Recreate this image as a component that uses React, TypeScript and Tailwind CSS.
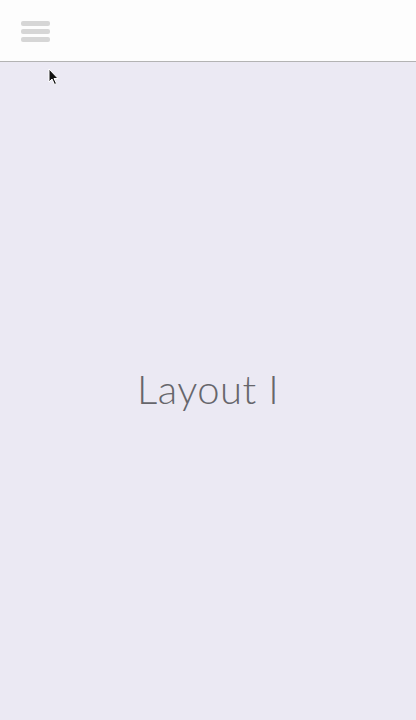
import React from "react";

export default function App() {
  return (
    <div className="relative flex h-[720px] w-[416px] flex-col overflow-hidden bg-[#ebe9f3]" style={{ fontFamily: "Lato, 'Open Sans', sans-serif" }}>
      <header className="flex h-[62px] shrink-0 items-start border-b border-[#b3b3b3] bg-[#fdfdfd] pl-[21px] pt-[21px]">
        <div className="flex w-[29px] flex-col gap-[3px]">
          <span className="h-[5px] rounded-[2px] bg-[#d6d6d6]" />
          <span className="h-[5px] rounded-[2px] bg-[#d6d6d6]" />
          <span className="h-[5px] rounded-[2px] bg-[#d6d6d6]" />
        </div>
      </header>
      <main className="flex flex-1 items-center justify-center pb-[4px]">
        <h1 className="text-[40px] font-light tracking-[0.5px] text-[#66666b]">Layout I</h1>
      </main>
      <svg className="absolute left-[48px] top-[68px]" width="12" height="18" viewBox="0 0 12 18">
        <path d="M1 1 L1 14 L4 11 L6.5 16.5 L8.5 15.5 L6 10.5 L10 10.5 Z" fill="#111" stroke="#fff" strokeWidth="1" />
      </svg>
    </div>
  );
}
